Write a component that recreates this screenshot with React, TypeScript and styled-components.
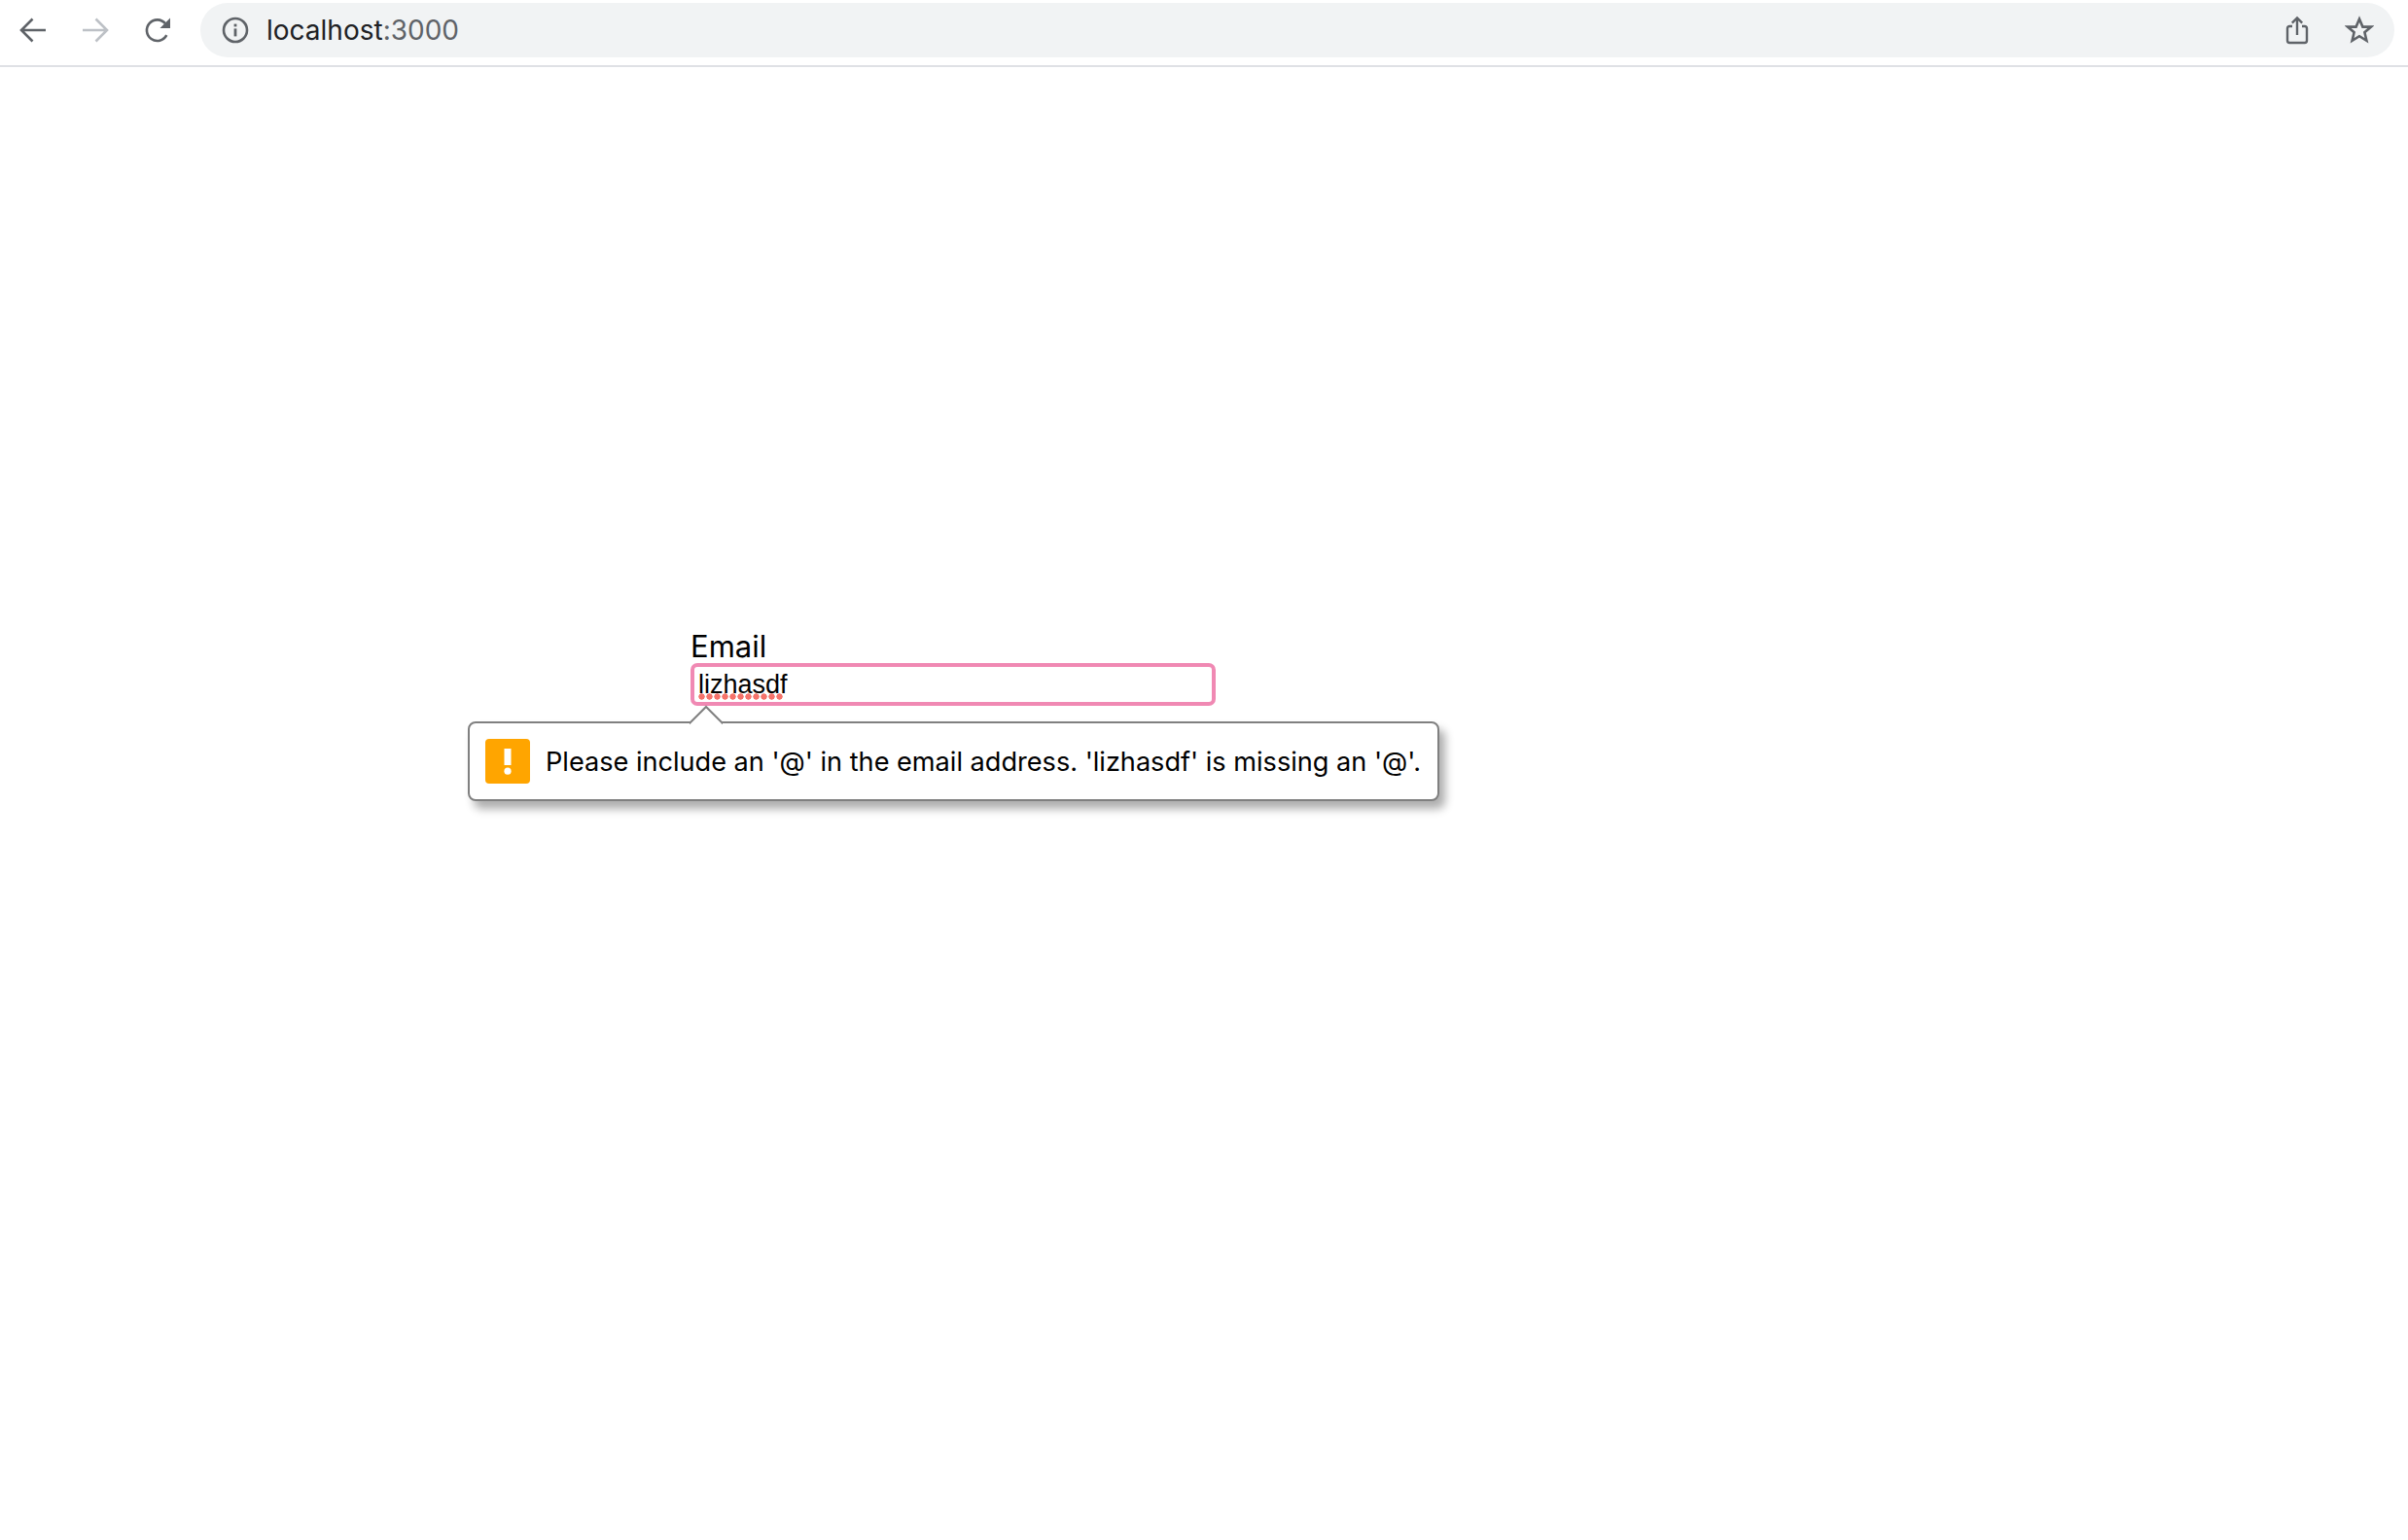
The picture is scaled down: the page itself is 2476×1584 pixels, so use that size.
import React from 'react';
import styled, { createGlobalStyle } from 'styled-components';

const GlobalStyle = createGlobalStyle`
  html, body {
    margin: 0;
    padding: 0;
    background: #fff;
    font-family: Inter, "Liberation Sans", sans-serif;
  }
`;

const Page = styled.div`
  display: flex;
  flex-direction: column;
  min-height: 100vh;
`;

const Toolbar = styled.header`
  display: flex;
  align-items: center;
  box-sizing: border-box;
  height: 69px;
  padding: 3px 14px 8px 2px;
  border-bottom: 2px solid #dfe1e5;
`;

const NavButton = styled.div`
  display: flex;
  align-items: center;
  justify-content: center;
  flex: none;
  width: 64px;
  height: 56px;
  color: ${(p: { $disabled?: boolean }) => (p.$disabled ? '#bdc1c6' : '#5f6368')};
`;

const Omnibox = styled.div`
  display: flex;
  align-items: center;
  flex: 1;
  height: 56px;
  margin-left: 12px;
  padding-left: 22px;
  padding-right: 4px;
  border-radius: 28px;
  background: #f1f3f4;
  color: #5f6368;
`;

const Url = styled.div`
  flex: 1;
  margin-left: 18px;
  font-size: 28px;
  color: #5f6368;
  white-space: nowrap;
`;

const Host = styled.span`
  color: #202124;
`;

const OmniAction = styled.div`
  display: flex;
  align-items: center;
  justify-content: center;
  width: 64px;
  height: 56px;
`;

const Content = styled.main`
  padding: 578px 0 0 710px;
`;

const Field = styled.div`
  position: relative;
  width: 540px;
`;

const Label = styled.label`
  display: block;
  height: 35px;
  font-size: 31px;
  line-height: 35px;
  color: #000;
`;

const EmailInput = styled.input`
  display: block;
  box-sizing: border-box;
  width: 100%;
  height: 44px;
  padding: 0 0 0 4px;
  border: 4px solid #f089b3;
  border-radius: 7px;
  outline: none;
  background: #fff;
  font-family: "Liberation Sans", Arial, sans-serif;
  font-size: 27px;
  color: #000;
`;

const Squiggle = styled.div`
  position: absolute;
  left: 8px;
  top: 66px;
  width: 88px;
  height: 7px;
  background: radial-gradient(circle at 3.5px 3.5px, #f5736b 2.9px, transparent 3.4px) 0 0 / 8px 7px repeat-x;
`;

const Bubble = styled.div`
  position: absolute;
  left: -229px;
  top: 95px;
  display: flex;
  align-items: center;
  gap: 16px;
  box-sizing: border-box;
  width: 999px;
  height: 82px;
  padding: 0 16px;
  border: 2px solid #808080;
  border-radius: 8px;
  background: #fff;
  box-shadow: 6px 8px 10px rgba(0, 0, 0, 0.32);
`;

const BubbleArrow = styled.svg`
  position: absolute;
  left: 226px;
  top: -19px;
  display: block;
`;

const WarnIcon = styled.div`
  display: flex;
  align-items: center;
  justify-content: center;
  flex: none;
  width: 46px;
  height: 46px;
  border-radius: 4px;
  background: #ffa500;
`;

const Message = styled.span`
  font-size: 27.12px;
  color: #000;
  white-space: nowrap;
`;

const BackIcon = ({ flip }: { flip?: boolean }) => (
  <svg width="28" height="28" viewBox="0 0 28 28" fill="none" stroke="currentColor" strokeWidth="2.6"
    style={flip ? { transform: 'scaleX(-1)' } : undefined}>
    <path d="M27 14H2M13.5 2.5L2 14l11.5 11.5" />
  </svg>
);

const ReloadIcon = () => (
  <svg width="28" height="28" viewBox="0 0 28 28" fill="none">
    <path d="M23.3 19.2A10.8 10.8 0 1 1 22 7.2" stroke="currentColor" strokeWidth="2.6" />
    <path d="M27 1.5V12H16.5z" fill="currentColor" />
  </svg>
);

const InfoIcon = () => (
  <svg width="28" height="28" viewBox="0 0 28 28" fill="none">
    <circle cx="14" cy="14" r="12" stroke="currentColor" strokeWidth="2.6" />
    <rect x="12.6" y="12.4" width="2.8" height="8" fill="currentColor" />
    <rect x="12.6" y="7.6" width="2.8" height="2.8" fill="currentColor" />
  </svg>
);

const ShareIcon = () => (
  <svg width="24" height="30" viewBox="0 0 24 30" fill="none" stroke="currentColor" strokeWidth="2.4">
    <path d="M7 11H4.2C2.9 11 2 11.9 2 13.2v12.6C2 27.1 2.9 28 4.2 28h15.6c1.3 0 2.2-.9 2.2-2.2V13.2c0-1.3-.9-2.2-2.2-2.2H17" />
    <path d="M12 20V2.5M6.8 7.6L12 2.5l5.2 5.1" />
  </svg>
);

const StarIcon = () => (
  <svg width="30" height="30" viewBox="0 0 30 30" fill="none" stroke="currentColor" strokeWidth="2.6">
    <path d="M15 3.6l3.4 8h8.6l-6.6 5.6 2 8.6L15 21.2l-7.4 4.6 2-8.6L3 11.6h8.6z" />
  </svg>
);

function App() {
  return (
    <Page>
      <GlobalStyle />
      <Toolbar>
        <NavButton><BackIcon /></NavButton>
        <NavButton $disabled><BackIcon flip /></NavButton>
        <NavButton><ReloadIcon /></NavButton>
        <Omnibox>
          <InfoIcon />
          <Url><Host>localhost</Host>:3000</Url>
          <OmniAction><ShareIcon /></OmniAction>
          <OmniAction><StarIcon /></OmniAction>
        </Omnibox>
      </Toolbar>
      <Content>
        <Field>
          <Label htmlFor="email">Email</Label>
          <EmailInput id="email" type="text" defaultValue="lizhasdf" spellCheck={false} />
          <Squiggle />
          <Bubble>
            <BubbleArrow width="34" height="20" viewBox="0 0 34 20">
              <path d="M-1 20L17 2l18 18" fill="#fff" stroke="#808080" strokeWidth="2" />
            </BubbleArrow>
            <WarnIcon>
              <svg width="8" height="27" viewBox="0 0 8 27" fill="#fff">
                <rect x="0.5" y="0" width="7" height="17" />
                <circle cx="4" cy="23.2" r="3.6" />
              </svg>
            </WarnIcon>
            <Message>Please include an '@' in the email address. 'lizhasdf' is missing an '@'.</Message>
          </Bubble>
        </Field>
      </Content>
    </Page>
  );
}

export default App;
